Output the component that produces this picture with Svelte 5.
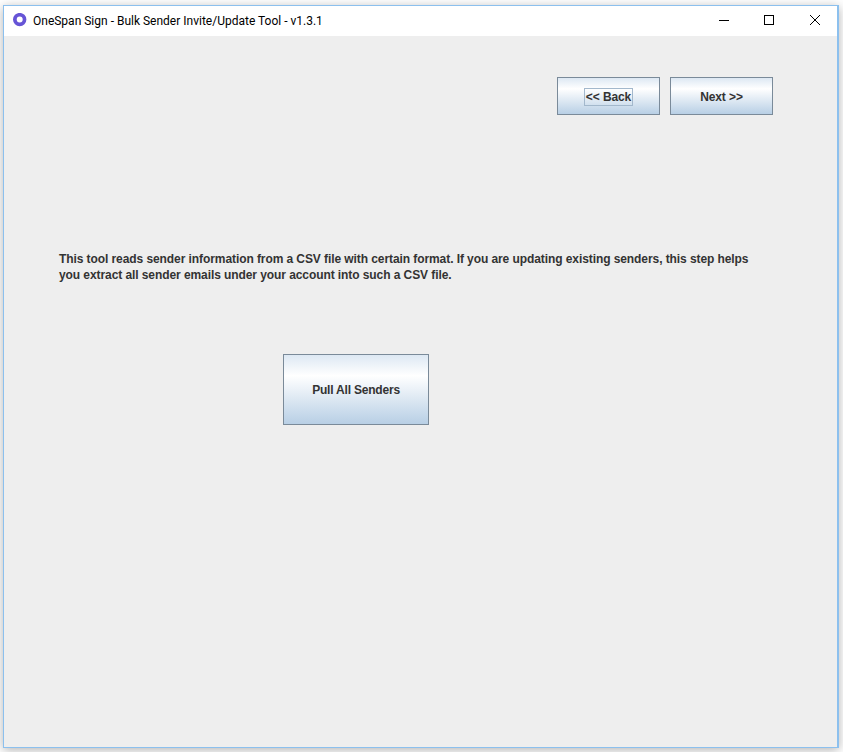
<script>
    let title = "OneSpan Sign - Bulk Sender Invite/Update Tool - v1.3.1";
</script>

<div class="window">
    <div class="titlebar">
        <svg class="logo" width="16" height="16" viewBox="0 0 16 16">
            <circle cx="7.7" cy="6.6" r="4.85" fill="none" stroke="#6654d6" stroke-width="3.7" />
        </svg>
        <span class="title">{title}</span>
        <div class="controls">
            <svg width="46" height="30" viewBox="0 0 46 30">
                <path d="M19 14.5h10" stroke="#000" stroke-width="1" />
            </svg>
            <svg width="46" height="30" viewBox="0 0 46 30">
                <rect x="18.5" y="9.5" width="9" height="9" fill="none" stroke="#000" stroke-width="1" />
            </svg>
            <svg width="46" height="30" viewBox="0 0 46 30">
                <path d="M18 9l10 10M28 9l-10 10" stroke="#000" stroke-width="1" />
            </svg>
        </div>
    </div>

    <main class="content">
        <div class="nav">
            <button class="btn nav-btn"><span class="focused">&lt;&lt; Back</span></button>
            <button class="btn nav-btn"><span>Next &gt;&gt;</span></button>
        </div>
        <p class="info">
            This tool reads sender information from a CSV file with certain format. If you are updating existing senders, this step helps<br />
            you extract all sender emails under your account into such a CSV file.
        </p>
        <button class="btn pull">Pull All Senders</button>
    </main>
</div>

<style>
    :global(body) {
        background: #fff;
    }

    .window {
        display: flex;
        flex-direction: column;
        box-sizing: border-box;
        height: 743px;
        margin: 5px 4px 4px 3px;
        border: 1px solid #8cc0ee;
        border-right-width: 2px;
        background: #eeeeee;
        box-shadow: 0 2px 10px rgba(0, 0, 0, 0.3);
    }

    .titlebar {
        display: flex;
        align-items: center;
        flex: none;
        height: 30px;
        background: #fff;
    }

    .logo {
        margin-left: 8px;
        margin-right: 5px;
    }

    .title {
        font-family: Roboto, sans-serif;
        font-size: 12px;
        color: #000;
    }

    .controls {
        display: flex;
        margin-left: auto;
        margin-right: -1px;
    }

    .content {
        flex: 1;
        display: flex;
        flex-direction: column;
        align-items: flex-start;
        font-family: "Liberation Sans", Arial, sans-serif;
        font-size: 12px;
        font-weight: bold;
        color: #333333;
    }

    .nav {
        display: flex;
        gap: 10px;
        align-self: flex-end;
        margin-top: 41px;
        margin-right: 64px;
    }

    .btn {
        box-sizing: border-box;
        padding: 2px 0 0;
        border: 1px solid #7a8a99;
        border-radius: 0;
        background: linear-gradient(#dde8f3, #ffffff 30%, #b8cfe5);
        font: inherit;
        color: inherit;
        letter-spacing: -0.1px;
    }

    .nav-btn {
        width: 103px;
        height: 38px;
    }

    .focused {
        display: inline-block;
        padding: 0 1px;
        line-height: 16px;
        outline: 1px solid #a3b8cc;
    }

    .info {
        margin: 136px 0 0 55px;
        line-height: 16px;
        white-space: nowrap;
        letter-spacing: -0.08px;
    }

    .pull {
        width: 146px;
        height: 71px;
        margin: 71px 0 0 279px;
        padding: 0;
        letter-spacing: -0.2px;
    }
</style>
